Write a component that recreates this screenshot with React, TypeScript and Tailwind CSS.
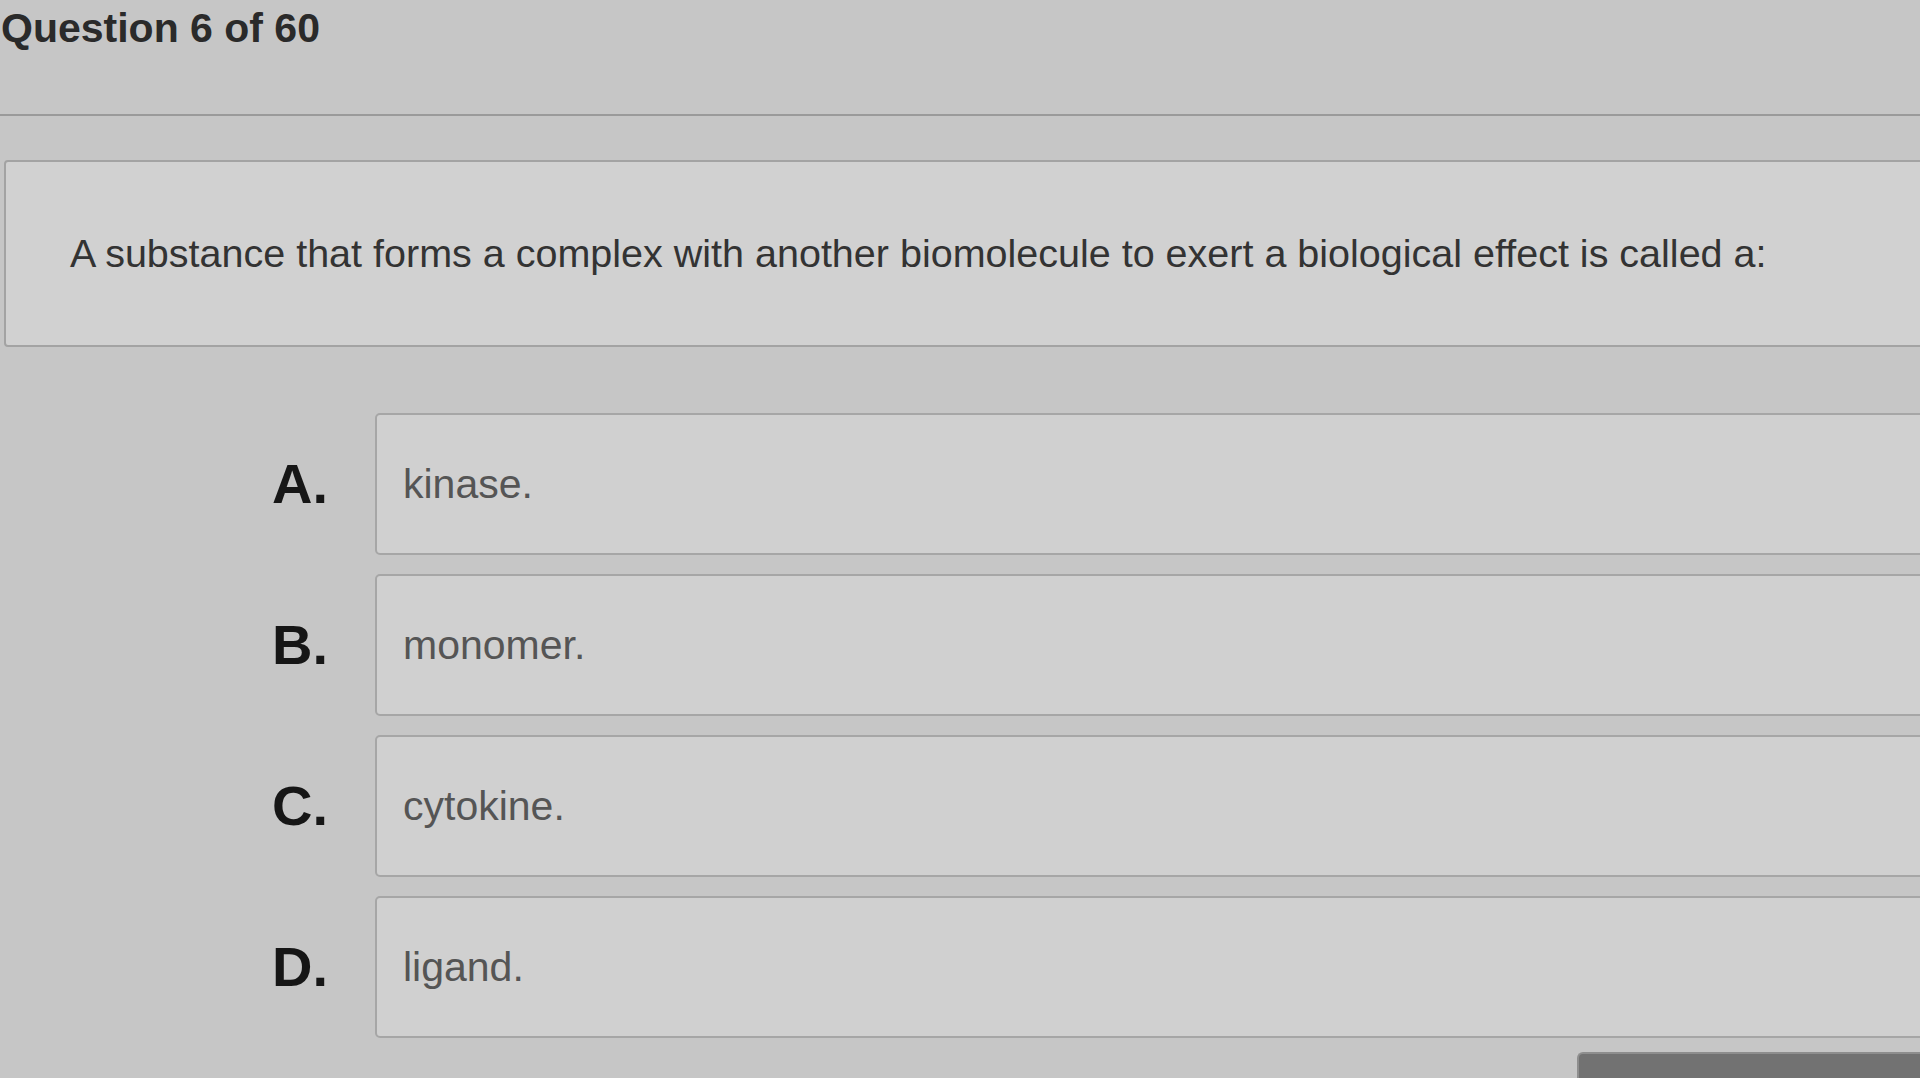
const options = [
  { letter: "A.", text: "kinase." },
  { letter: "B.", text: "monomer." },
  { letter: "C.", text: "cytokine." },
  { letter: "D.", text: "ligand." },
];

export default function App() {
  return (
    <div className="h-[1078px] w-full overflow-hidden bg-[#c6c6c6] font-['Liberation_Sans',Arial,sans-serif]">
      {/* Header */}
      <header className="h-[116px] border-b-2 border-[#9a9a9a] pl-[1px] pt-[8px]">
        <h1 className="text-[41px] font-bold leading-none text-[#2a2a2a]">Question 6 of 60</h1>
      </header>

      {/* Question stem */}
      <section className="-mr-[8px] ml-[4px] mt-[44px] flex h-[187px] items-center rounded-[4px] border-2 border-[#a3a3a3] bg-[#d1d1d1] pl-[64px]">
        <p className="whitespace-nowrap text-[39.5px] leading-none text-[#333333]">
          A substance that forms a complex with another biomolecule to exert a biological effect is called a:
        </p>
      </section>

      {/* Answer choices */}
      <div className="mt-[66px] flex flex-col gap-[19px]">
        {options.map((opt) => (
          <div key={opt.letter} className="flex h-[142px] items-center">
            <span className="w-[375px] shrink-0 pl-[272px] text-[56px] font-bold leading-none text-[#161616]">
              {opt.letter}
            </span>
            <div className="-mr-[8px] flex h-full flex-1 items-center rounded-[5px] border-2 border-[#a6a6a6] bg-[#d0d0d0] pl-[26px]">
              <span className="text-[41px] leading-none text-[#555555]">{opt.text}</span>
            </div>
          </div>
        ))}
      </div>

      {/* Next button (cut off at bottom edge) */}
      <div className="mt-[14px] flex justify-end">
        <div className="h-[40px] w-[343px] rounded-tl-[6px] border-l-2 border-t-2 border-[#8e8e8e] bg-[#727272]" />
      </div>
    </div>
  );
}
